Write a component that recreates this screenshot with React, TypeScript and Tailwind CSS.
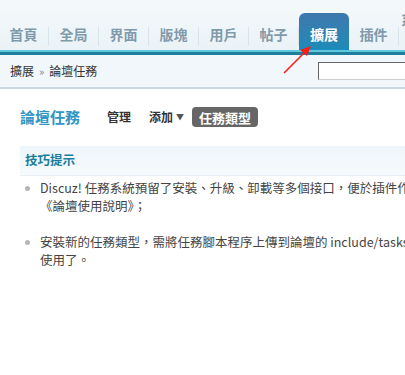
import React from "react";

const tabs = ["首頁", "全局", "界面", "版塊", "用戶", "帖子", "擴展", "插件"];
const font = { fontFamily: '"Noto Sans CJK TC", "Liberation Sans", sans-serif' };

const tips = [
  [
    "Discuz! 任務系統預留了安裝、升級、卸載等多個接口，便於插件作者開發新的任務類型，詳細請參考",
    "《論壇使用說明》；",
  ],
  [
    "安裝新的任務類型，需將任務腳本程序上傳到論壇的 include/tasks/ 目錄，然後在當前頁面即可進行安裝與",
    "使用了。",
  ],
];

export default function App() {
  return (
    <div className="relative w-[405px] h-[375px] overflow-hidden bg-white" style={font}>
      {/* top nav */}
      <div className="h-[55px] bg-gradient-to-b from-[#f5f9fb] to-[#e9f2f6] pt-[13px]">
        <div className="flex h-[37px] -ml-px">
          {tabs.map((t) =>
            t === "擴展" ? (
              <div
                key={t}
                className="shrink-0 w-[50px] h-[37px] flex items-center justify-center rounded-t-[6px] bg-gradient-to-b from-[#3d78ad] to-[#1a8bb9] text-white text-[14px] font-bold pt-[6px]"
              >
                {t}
              </div>
            ) : (
              <div key={t} className="shrink-0 w-[50px] h-[37px] flex items-center pt-[6px]">
                <span className="flex-1 text-center text-[14px] font-bold text-[#7f9aab]">{t}</span>
                <span className="w-px h-[19px] mt-[4px] bg-[#d8e3ea]" />
              </div>
            )
          )}
          <span className="shrink-0 text-[14px] font-bold text-[#7f9aab] pl-[2px] -mt-[4px]">系</span>
        </div>
        <div className="h-[2px] bg-[#5ec9de]" />
        <div className="h-[3px] bg-[#1f7e9b]" />
      </div>

      {/* breadcrumb */}
      <div className="h-[34px] bg-[#f1f7fa] border-b-2 border-[#c9d8e1] flex items-center justify-between pl-[10px]">
        <div className="text-[12px] text-[#333] flex items-center">
          <span>擴展</span>
          <span className="mx-[5px] text-[#888] text-[11px]">»</span>
          <span>論壇任務</span>
        </div>
        <div className="w-[90px] h-[18px] -mr-[3px] border border-t-[#666] border-l-[#666] border-r-[#ccc] border-b-[#ccc] bg-white" />
      </div>

      {/* title row */}
      <div className="flex items-center pl-[20px] pt-[17px]">
        <span className="text-[15px] font-bold text-[#3096c6] w-[87px]">論壇任務</span>
        <span className="text-[12px] font-bold text-[#333] mr-[18px]">管理</span>
        <span className="text-[12px] font-bold text-[#333]">添加</span>
        <span className="text-[8px] text-[#555] ml-[3px] mr-[8px]">▼</span>
        <span className="text-[13px] font-bold text-white bg-[#666] rounded-[4px] px-[7px] h-[20px] flex items-center">
          任務類型
        </span>
      </div>

      {/* tips */}
      <div className="ml-[20px] mt-[17px] h-[30px] bg-gradient-to-b from-[#eef6fb] to-[#f6fafc] border-b border-dotted border-[#dde7ee] flex items-center pl-[5px]">
        <span className="text-[12.5px] font-bold text-[#1b7d9c]">技巧提示</span>
      </div>
      <div className="pl-[25px] pt-[3px]">
        {tips.map((lines, i) => (
          <div key={i} className="flex mb-[18px]">
            <span className="w-[5px] h-[5px] rounded-full bg-[#b5b5b5] mt-[7px] mr-[10px] shrink-0" />
            <div className="text-[12.5px] leading-[18px] text-[#444] whitespace-nowrap">
              {lines.map((l, j) => (
                <div key={j}>{l}</div>
              ))}
            </div>
          </div>
        ))}
      </div>

      {/* red arrow */}
      <svg className="absolute left-0 top-0 pointer-events-none" width="405" height="375">
        <line x1="284" y1="73" x2="308" y2="49" stroke="#ff1a1a" strokeWidth="1.6" />
        <polygon points="311,46 300,50 307,56" fill="#ff1a1a" />
      </svg>
    </div>
  );
}
